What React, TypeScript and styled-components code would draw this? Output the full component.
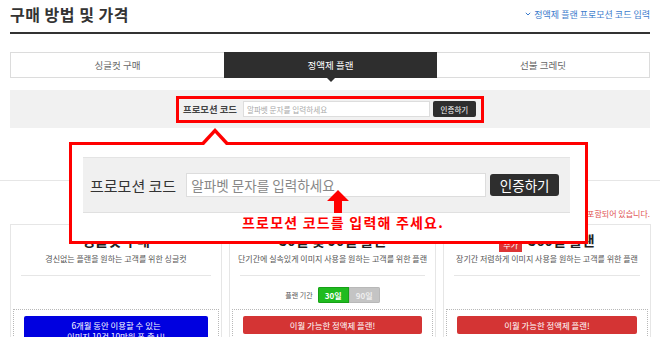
import React from "react";
import styled, { createGlobalStyle, css } from "styled-components";

const Global = createGlobalStyle`
  html, body { margin: 0; padding: 0; background: #fff; }
  body { font-family: "Noto Sans CJK KR", "Noto Sans", sans-serif; color: #333; }
  * { box-sizing: border-box; }
`;

const Page = styled.div`
  position: relative;
  width: 660px;
  height: 337px;
  overflow: hidden;
  padding: 0 10px;
`;

const Header = styled.div`
  display: flex;
  justify-content: space-between;
  align-items: center;
  height: 34px;
  padding-bottom: 4px;
  border-bottom: 2px solid #333;
`;

const Title = styled.h2`
  margin: 0;
  font-size: 16px;
  font-weight: 700;
  letter-spacing: 0.5px;
  color: #333;
`;

const CodeLink = styled.a`
  font-size: 9px;
  color: #3b7bcc;
  text-decoration: none;
  display: flex;
  align-items: center;
  gap: 3px;
`;

const Tabs = styled.div`
  display: grid;
  grid-template-columns: 213px 213px 1fr;
  margin-top: 18px;
  height: 26px;
  border: 1px solid #dcdcdc;
`;

const Tab = styled.div<{ $active?: boolean }>`
  position: relative;
  display: flex;
  align-items: center;
  justify-content: center;
  font-size: 9.5px;
  color: #666;
  ${(p) =>
    p.$active &&
    css`
      background: #2e2e2e;
      color: #fff;
      margin: -1px 0;
      &::after {
        content: "";
        position: absolute;
        left: 50%;
        bottom: -4px;
        transform: translateX(-50%);
        border-left: 4px solid transparent;
        border-right: 4px solid transparent;
        border-top: 4px solid #2e2e2e;
      }
    `}
`;

const PromoPanel = styled.div`
  margin-top: 12px;
  height: 38px;
  background: #f1f1f1;
  display: flex;
  align-items: center;
  justify-content: center;
`;

const PromoBox = styled.div`
  display: flex;
  align-items: center;
  height: 27px;
  width: 308px;
  border: 3px solid #ff0000;
  padding: 0 4px;
`;

const SmallLabel = styled.span`
  font-size: 9.4px;
  font-weight: 700;
  color: #444;
  margin-right: 6px;
  white-space: nowrap;
`;

const SmallInput = styled.div`
  width: 187px;
  height: 16px;
  background: #fff;
  border: 1px solid #ddd;
  font-size: 7.6px;
  color: #aaa;
  display: flex;
  align-items: center;
  padding-left: 3px;
`;

const SmallButton = styled.div`
  margin-left: 3px;
  width: 43px;
  height: 16px;
  background: #2e2e2e;
  border-radius: 2px;
  color: #fff;
  font-size: 7.5px;
  display: flex;
  align-items: center;
  justify-content: center;
`;

const Divider = styled.div`
  margin: 52px -10px 0;
  border-top: 1px solid #e6e6e6;
`;

const Note = styled.div`
  margin-top: 27px;
  text-align: right;
  font-size: 8px;
  line-height: 12px;
  color: #e05050;
`;

const Cards = styled.div`
  display: grid;
  grid-template-columns: 212px 207px 208px;
  column-gap: 7px;
  margin-top: 4px;
`;

const Card = styled.div`
  border: 1px solid #e6e6e6;
  border-bottom: none;
  height: 120px;
  padding: 6px 1px 0;
  display: flex;
  flex-direction: column;
  align-items: stretch;
`;

const CardTitle = styled.div`
  display: flex;
  justify-content: center;
  align-items: center;
  gap: 6px;
  height: 18px;
  font-size: 14px;
  font-weight: 700;
  color: #222;
`;

const Badge = styled.span`
  background: #d33;
  color: #fff;
  font-size: 8px;
  font-weight: 400;
  padding: 0 4px;
  height: 14px;
  line-height: 14px;
  margin-top: 10px;
`;

const CardSub = styled.div`
  margin-top: 4px;
  text-align: center;
  font-size: 8px;
  line-height: 12px;
  color: #555;
  white-space: nowrap;
`;

const CardRule = styled.div`
  margin: 10px 9px 0;
  border-top: 1px solid #e6e6e6;
`;

const OptionRow = styled.div`
  height: 16px;
  margin-top: 11px;
  display: flex;
  justify-content: center;
  align-items: center;
  gap: 5px;
  font-size: 7px;
  color: #555;
`;

const Toggle = styled.div`
  display: flex;
  border-radius: 2px;
  overflow: hidden;
`;

const ToggleItem = styled.span<{ $on?: boolean }>`
  width: 31px;
  height: 16px;
  display: flex;
  align-items: center;
  justify-content: center;
  font-size: 8px;
  font-weight: 700;
  color: ${(p) => (p.$on ? "#fff" : "#eee")};
  background: ${(p) => (p.$on ? "#1fbb1f" : "#c4c4c4")};
  border: 1px solid ${(p) => (p.$on ? "#16a016" : "#b8b8b8")};
`;

const OfferBox = styled.div`
  margin: 6px 1px 0;
  border: 1px dotted #b8b8b8;
  border-bottom: none;
  flex: 1;
  padding: 6px 10px 0;
`;

const OfferButton = styled.div<{ $tone: "blue" | "red" }>`
  border-radius: 2px;
  color: #fff;
  text-align: center;
  font-size: 8.4px;
  ${(p) =>
    p.$tone === "blue"
      ? css`
          background: #0000e0;
          line-height: 11px;
          padding-top: 4px;
        `
      : css`
          background: #d43434;
          height: 18px;
          line-height: 18px;
        `}
`;

/* annotation overlay */
const Callout = styled.div`
  position: absolute;
  left: 69px;
  top: 142px;
  width: 519px;
  height: 102px;
  border: 3px solid #ff0000;
  background: #fff;
  &::before {
    content: "";
    position: absolute;
    left: 130px;
    top: -17px;
    border-left: 13px solid transparent;
    border-right: 13px solid transparent;
    border-bottom: 14px solid #ff0000;
  }
  &::after {
    content: "";
    position: absolute;
    left: 132px;
    top: -12px;
    border-left: 11px solid transparent;
    border-right: 11px solid transparent;
    border-bottom: 12px solid #fff;
  }
`;

const BigPanel = styled.div`
  margin: 12px 0 0 11px;
  width: 487px;
  height: 56px;
  background: #f0f0f0;
  border-top: 1px solid #e4e4e4;
  border-bottom: 1px solid #e0e0e0;
  display: flex;
  align-items: center;
  padding-left: 7px;
`;

const BigLabel = styled.span`
  font-size: 15px;
  color: #333;
  margin-right: 10px;
  white-space: nowrap;
`;

const BigInput = styled.div`
  width: 300px;
  height: 24px;
  background: #fff;
  border: 1px solid #ddd;
  font-size: 13.6px;
  color: #888;
  display: flex;
  align-items: center;
  padding-left: 4px;
`;

const BigButton = styled.div`
  margin-left: 4px;
  width: 69px;
  height: 22px;
  background: #2e2e2e;
  border-radius: 3px;
  color: #fff;
  font-size: 13.5px;
  display: flex;
  align-items: center;
  justify-content: center;
`;

const Hint = styled.div`
  margin-left: 170px;
  font-size: 14px;
  font-weight: 700;
  line-height: 18px;
  color: #ff0000;
  letter-spacing: 1.2px;
  white-space: nowrap;
`;

const Arrow = styled.svg`
  position: absolute;
  left: 255px;
  top: 45px;
`;

function Chevron() {
  return (
    <svg width="6" height="4" viewBox="0 0 6 4">
      <path d="M0.8 0.8 L3 3 L5.2 0.8" fill="none" stroke="#3b7bcc" strokeWidth="1" />
    </svg>
  );
}

export default function App() {
  return (
    <>
      <Global />
      <Page>
        <Header>
          <Title>구매 방법 및 가격</Title>
          <CodeLink>
            <Chevron />
            정액제 플랜 프로모션 코드 입력
          </CodeLink>
        </Header>

        <Tabs>
          <Tab>싱글컷 구매</Tab>
          <Tab $active>정액제 플랜</Tab>
          <Tab>선불 크레딧</Tab>
        </Tabs>

        <PromoPanel>
          <PromoBox>
            <SmallLabel>프로모션 코드</SmallLabel>
            <SmallInput>알파벳 문자를 입력하세요</SmallInput>
            <SmallButton>인증하기</SmallButton>
          </PromoBox>
        </PromoPanel>

        <Divider />
        <Note>* 모든 가격은 부가세가 포함되어 있습니다.</Note>

        <Cards>
          <Card>
            <CardTitle>싱글컷 구매</CardTitle>
            <CardSub>경신없는 플랜을 원하는 고객를 위한 싱글컷</CardSub>
            <CardRule />
            <OptionRow />
            <OfferBox>
              <OfferButton $tone="blue">
                6개월 동안 이용할 수 있는
                <br />
                이미지 10건 10만원 폰 출시!
              </OfferButton>
            </OfferBox>
          </Card>
          <Card>
            <CardTitle>30일 및 90일 플랜</CardTitle>
            <CardSub>단기간에 실속있게 이미지 사용을 원하는 고객를 위한 플랜</CardSub>
            <CardRule />
            <OptionRow>
              플랜 기간
              <Toggle>
                <ToggleItem $on>30일</ToggleItem>
                <ToggleItem>90일</ToggleItem>
              </Toggle>
            </OptionRow>
            <OfferBox>
              <OfferButton $tone="red">이월 가능한 정액제 플랜!</OfferButton>
            </OfferBox>
          </Card>
          <Card>
            <CardTitle>
              <Badge>추가</Badge>
              360일 플랜
            </CardTitle>
            <CardSub>장기간 저렴하게 이미지 사용을 원하는 고객를 위한 플랜</CardSub>
            <CardRule />
            <OptionRow />
            <OfferBox>
              <OfferButton $tone="red">이월 가능한 정액제 플랜!</OfferButton>
            </OfferBox>
          </Card>
        </Cards>

        <Callout>
          <BigPanel>
            <BigLabel>프로모션 코드</BigLabel>
            <BigInput>알파벳 문자를 입력하세요</BigInput>
            <BigButton>인증하기</BigButton>
          </BigPanel>
          <Hint>프로모션 코드를 입력해 주세요.</Hint>
          <Arrow width="22" height="23" viewBox="0 0 22 23">
            <polygon points="11,0 22,11 15,11 15,23 7,23 7,11 0,11" fill="#ff0000" />
          </Arrow>
        </Callout>
      </Page>
    </>
  );
}
